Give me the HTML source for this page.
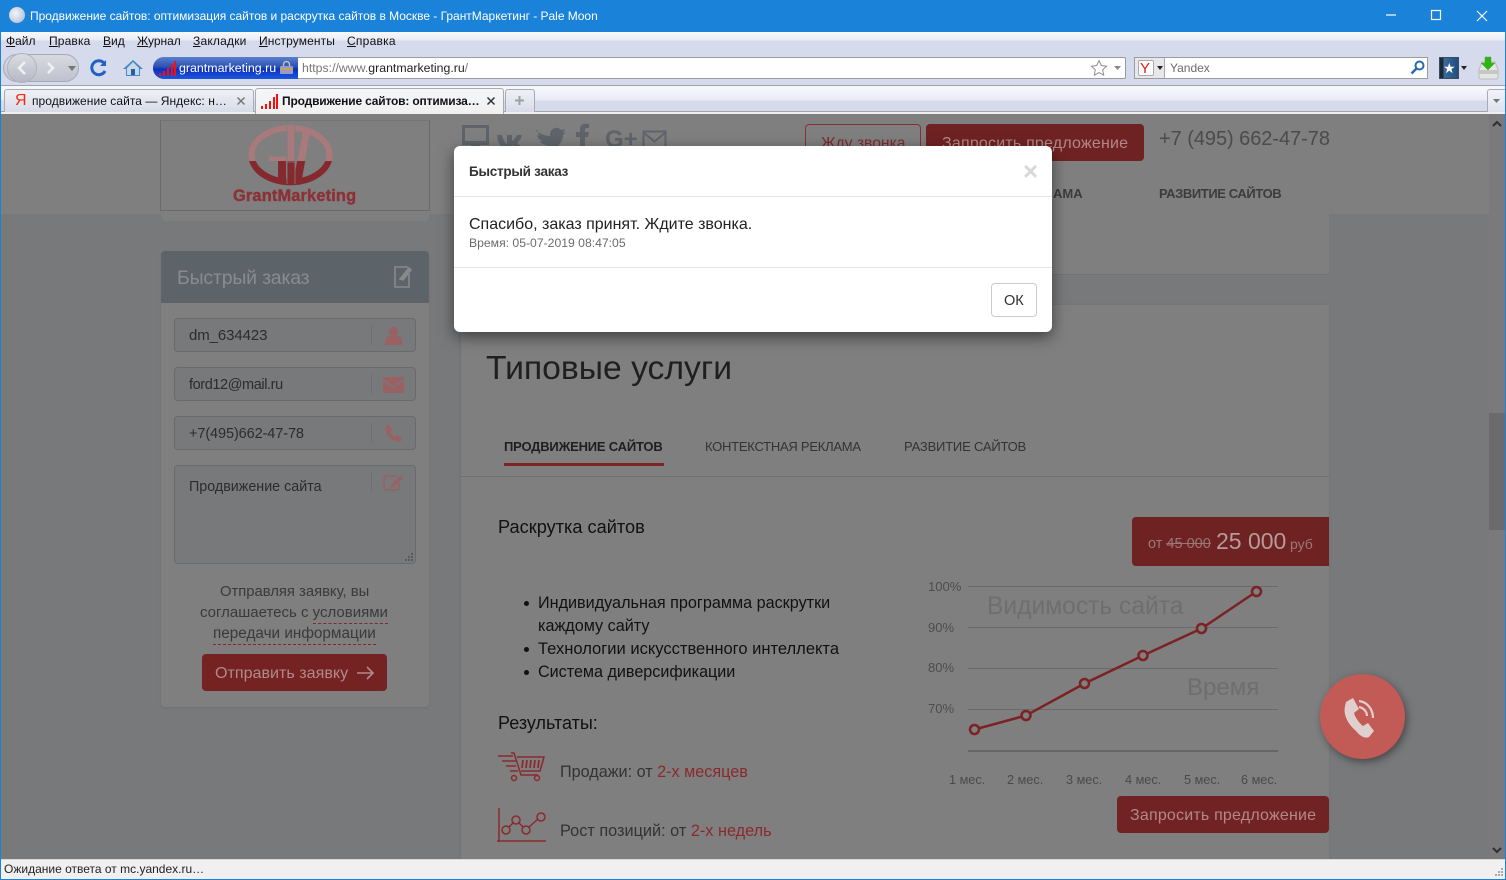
<!DOCTYPE html>
<html lang="ru"><head><meta charset="utf-8"><title>Продвижение сайтов</title>
<style>
*{box-sizing:border-box}
html,body{margin:0;padding:0;width:1506px;height:880px;overflow:hidden;background:#7d7d7d}
body{font-family:"Liberation Sans",sans-serif;position:relative}
.a{position:absolute;white-space:nowrap;line-height:1}
.b{position:absolute}
u{text-decoration-thickness:1px;text-underline-offset:1px}
.inp{position:absolute;left:174px;width:242px;height:34px;border:1px solid #686a6c;border-radius:4px;background:#77797b}
.sep{position:absolute;left:371px;width:1px;background:#6d6f71}
.t{color:#2c2c2c;font-size:15px}
.li{color:#111;left:538px}
.mn{font-size:12.700px;color:#4a4a4a;top:774px}
.pc{font-size:13px;color:#4d4d4d;left:928px}
.gl{position:absolute;left:968px;width:310px;height:1px;background:#6a6a6a}
</style></head><body>

<!-- page underneath -->
<div class="b" style="left:1px;top:114px;width:1504px;height:745px;background:#78797b"></div>
<div class="b" style="left:1px;top:114px;width:1488px;height:100px;background:#7f7f7f"></div>
<div class="b" style="left:161px;top:214px;width:268px;height:7px;background:#7f7f7f;border-radius:0 0 4px 4px"></div>
<div class="b" style="left:460px;top:214px;width:869px;height:61px;background:#7f7f7f;border-bottom:1px solid #737375"></div>
<div class="b" style="left:460px;top:305px;width:869px;height:554px;background:#7f7f7f;border-left:1px solid #737375;box-shadow:0 0 2px #737375"></div>
<div class="b" style="left:461px;top:476px;width:868px;height:1px;background:#6f6f6f"></div>

<!-- logo -->
<div class="b" style="left:160px;top:120px;width:270px;height:91px;border:1px solid #6b6b6b;border-top-color:#747474"></div>
<svg class="b" style="left:245px;top:122px" width="92" height="66" viewBox="0 0 92 66">
<defs>
<clipPath id="up"><rect x="0" y="0" width="92" height="39"/></clipPath>
<clipPath id="lo"><rect x="0" y="39" width="92" height="27"/></clipPath>
</defs>
<g clip-path="url(#up)" fill="none" stroke="#a87a7c">
<ellipse cx="45.500" cy="33" rx="39" ry="27" stroke-width="6"/>
<path d="M24 38h17M46 4v58M52 62 62 6" stroke-width="7"/>
</g>
<g clip-path="url(#lo)" fill="none" stroke="#842a2e">
<ellipse cx="45.500" cy="33" rx="39" ry="27" stroke-width="6.500"/>
<path d="M37 36v24M46 4v58M52 62 62 6" stroke-width="8"/>
</g>
<path d="M42 4v58M50 4v58M42 40h8" stroke="#7f7f7f" stroke-width=".8" fill="none"/>
</svg>
<div class="a" style="left:233px;top:188px;font-size:16.400px;font-weight:bold;color:#8c3136;letter-spacing:.15px;-webkit-text-stroke:.4px #8c3136">GrantMarketing</div>

<!-- header icons -->
<svg class="b" style="left:460px;top:122px" width="210" height="30" viewBox="0 0 210 30" fill="#5e6469">
<path d="M3.500 4.500h24v17h-24z" fill="none" stroke="#5e6469" stroke-width="3"/><path d="M2 19h27v4H2zM11 23h9v3h5v3H6v-3h5z"/>
<path d="M37 13h5c1 5 3 8 5 9v-9h5v6c2-1 4-4 5-6h5c-1 4-3 6-5 8 2 1 5 4 6 8h-5c-1-3-3-5-6-6v6h-2c-7 0-12-6-13-16z"/>
<path d="M75 8c5 4 10 6 15 6-1-7 7-11 11-6l4-1-2 4 3-1-3 3c0 11-12 18-25 13 4 0 7-1 9-3-4 0-6-2-7-4h3c-4-1-6-4-6-6l3 1c-3-3-3-6-2-6z"/>
<path d="M120 28V15h-4v-5h4V7c0-4 3-6 9-5v4c-3 0-4 0-4 2v2h4l-1 5h-3v13z"/>
<text x="145" y="25" font-family="Liberation Sans" font-size="24" font-weight="bold">G+</text>
<path d="M183.500 9.500h22v18h-22zM183.500 10.500l11 9 11-9" fill="none" stroke="#5e6469" stroke-width="2"/>
</svg>
<div class="b" style="left:805px;top:124px;width:116px;height:37px;border:1px solid #8a3034;border-radius:4px"></div>
<div class="a" style="left:821px;top:136px;font-size:15.700px;color:#7d2a2d">Жду звонка</div>
<div class="b" style="left:926px;top:124px;width:218px;height:37px;background:#6f2222;border-radius:4px"></div>
<div class="a" style="left:942px;top:136px;font-size:16px;color:#b48888;letter-spacing:.2px">Запросить предложение</div>
<div class="a" style="left:1159px;top:129px;font-size:20px;color:#4b4b4b;letter-spacing:-.05px">+7 (495) 662-47-78</div>
<div class="a" style="left:1053px;top:187px;font-size:13px;font-weight:bold;color:#3c3c3c">АМА</div>
<div class="a" style="left:1159px;top:187px;font-size:13px;font-weight:bold;color:#3c3c3c;letter-spacing:-.4px">РАЗВИТИЕ САЙТОВ</div>

<!-- left form -->
<div class="b" style="left:161px;top:251px;width:268px;height:456px;background:#7f7f7f;border-radius:4px;box-shadow:0 1px 2px #707072"></div>
<div class="b" style="left:161px;top:251px;width:268px;height:52px;background:#5c6369;border-radius:4px 4px 0 0"></div>
<div class="a" style="left:177px;top:269px;font-size:19.500px;color:#888c90;letter-spacing:-.2px">Быстрый заказ</div>
<svg class="b" style="left:393px;top:265px" width="20" height="24" viewBox="0 0 20 24" fill="none" stroke="#868a8d" stroke-width="1.600"><path d="M15 2H2v20h14V9"/><path d="M7 14 16 3l2 2-8 10z" fill="#868a8d"/></svg>

<div class="inp" style="top:318px"></div><div class="sep" style="top:325px;height:20px"></div>
<div class="a t" style="left:189px;top:328px;letter-spacing:-.1px">dm_634423</div>
<svg class="b" style="left:385px;top:326px" width="17" height="19" viewBox="0 0 17 19" fill="#9a6163"><circle cx="8.500" cy="5.500" r="4.700"/><path d="M0 19v-4c0-4 3-5 5-5h7c2 0 5 1 5 5v4z"/></svg>

<div class="inp" style="top:367px"></div><div class="sep" style="top:374px;height:20px"></div>
<div class="a t" style="left:189px;top:378px;font-size:14.500px;letter-spacing:-.4px">ford12@mail.ru</div>
<svg class="b" style="left:383px;top:377px" width="21" height="16" viewBox="0 0 21 16"><rect width="21" height="16" rx="2" fill="#9a6163"/><path d="M0 3 10.500 10 21 3" fill="none" stroke="#77797b" stroke-width="1.300"/></svg>

<div class="inp" style="top:416px"></div><div class="sep" style="top:423px;height:20px"></div>
<div class="a t" style="left:189px;top:427px;font-size:14.500px;letter-spacing:-.1px">+7(495)662-47-78</div>
<svg class="b" style="left:385px;top:425px" width="17" height="17" viewBox="0 0 17 17" fill="#9a6163"><path d="M1 1 4 0l3 5-2 2c1 2 3 4 5 5l2-2 5 3-1 3c-2 1-5 1-8-1C4 13 2 10 1 7 0 5 0 3 1 1z"/></svg>

<div class="inp" style="top:465px;height:99px"></div><div class="sep" style="top:472px;height:20px"></div>
<div class="a t" style="left:189px;top:480px;font-size:14.300px">Продвижение сайта</div>
<svg class="b" style="left:383px;top:474px" width="21" height="17" viewBox="0 0 21 17" fill="none" stroke="#9a6163" stroke-width="1.600"><path d="M14 2H3a2 2 0 0 0-2 2v10a2 2 0 0 0 2 2h11a2 2 0 0 0 2-2V9"/><path d="M8 11 17 2l3 2-9 9-4 1z" fill="#9a6163" stroke="none"/></svg>
<svg class="b" style="left:404px;top:552px" width="10" height="10" fill="#595b5d"><rect x="7" y="1" width="2" height="2"/><rect x="4" y="4" width="2" height="2"/><rect x="7" y="4" width="2" height="2"/><rect x="1" y="7" width="2" height="2"/><rect x="4" y="7" width="2" height="2"/><rect x="7" y="7" width="2" height="2"/></svg>

<div class="a t" style="left:220px;top:585px;font-size:14.800px;color:#3a3a3a">Отправляя заявку, вы</div>
<div class="a t" style="left:200px;top:605px;font-size:15px;color:#3a3a3a">соглашаетесь с <span style="border-bottom:1px dashed #7f2a2d;padding-bottom:2px">условиями</span></div>
<div class="a t" style="left:213px;top:626px;font-size:15.300px;color:#3a3a3a"><span style="border-bottom:1px dashed #7f2a2d;padding-bottom:2px">передачи информации</span></div>
<div class="b" style="left:202px;top:654px;width:185px;height:37px;background:#742222;border-radius:4px"></div>
<div class="a" style="left:215px;top:665px;font-size:16.100px;color:#b08a8a">Отправить заявку</div>
<svg class="b" style="left:357px;top:665px" width="18" height="16" fill="none" stroke="#b08a8a" stroke-width="1.600"><path d="M0 8h16M10 2l6 6-6 6"/></svg>

<!-- main content -->
<div class="a" style="left:486px;top:352px;font-size:33.700px;color:#1f1f1f">Типовые услуги</div>
<div class="a" style="left:504px;top:440px;font-size:13px;font-weight:bold;color:#1f1f1f;letter-spacing:-.2px">ПРОДВИЖЕНИЕ САЙТОВ</div>
<div class="b" style="left:504px;top:463px;width:160px;height:3px;background:#7f2424"></div>
<div class="a" style="left:705px;top:440px;font-size:13px;color:#333;letter-spacing:-.25px">КОНТЕКСТНАЯ РЕКЛАМА</div>
<div class="a" style="left:904px;top:440px;font-size:13px;color:#333;letter-spacing:-.2px">РАЗВИТИЕ САЙТОВ</div>
<div class="a" style="left:498px;top:518px;font-size:18.200px;color:#111">Раскрутка сайтов</div>

<div class="b" style="left:524px;top:601px;width:5px;height:5px;border-radius:50%;background:#111"></div>
<div class="a li" style="top:595px;font-size:16.200px">Индивидуальная программа раскрутки</div>
<div class="a li" style="top:618px;font-size:16.200px">каждому сайту</div>
<div class="b" style="left:524px;top:647px;width:5px;height:5px;border-radius:50%;background:#111"></div>
<div class="a li" style="top:641px;font-size:16.550px">Технологии искусственного интеллекта</div>
<div class="b" style="left:524px;top:670px;width:5px;height:5px;border-radius:50%;background:#111"></div>
<div class="a li" style="top:664px;font-size:16.150px">Система диверсификации</div>
<div class="a" style="left:498px;top:714px;font-size:18px;color:#111">Результаты:</div>

<svg class="b" style="left:497px;top:751px" width="50" height="32" viewBox="0 0 50 32" fill="none" stroke="#8a2a2d" stroke-width="1.500">
<path d="M1 5h15M5 10h14M9 15h10M13 20h8M14 2h3l7 22h17M20 6h27l-4 14H24"/><path d="M26 9l-1 8M30 9l-1 8M34 9l-1 8M38 9l-1 8M42 9l-1 8" stroke-width="1.700"/><circle cx="17" cy="27" r="2.500"/><circle cx="40" cy="27" r="2.500"/>
</svg>
<div class="a" style="left:560px;top:764px;font-size:16.200px;color:#333">Продажи: от <span style="color:#8a2a2d">2-х месяцев</span></div>
<svg class="b" style="left:497px;top:808px" width="50" height="36" viewBox="0 0 50 36" fill="none" stroke="#8a2a2d" stroke-width="1.500">
<path d="M2 0v34M0 33h49"/><circle cx="9" cy="22" r="4"/><circle cx="19" cy="12" r="4"/><circle cx="29" cy="22" r="4"/><circle cx="44" cy="9" r="4"/><path d="M12 19l4-4M22 15l4 4M32 19l9-8"/>
</svg>
<div class="a" style="left:560px;top:823px;font-size:16.300px;color:#333">Рост позиций: от <span style="color:#8a2a2d">2-х недель</span></div>

<!-- price -->
<div class="b" style="left:1132px;top:517px;width:197px;height:49px;background:#6f2222;border-radius:4px 0 0 4px"></div>
<div class="a" style="left:1148px;top:537px;font-size:14.500px;color:#9d7676">от <s>45 000</s></div>
<div class="a" style="left:1216px;top:530px;font-size:23px;color:#b59b9b">25 000</div>
<div class="a" style="left:1290px;top:537px;font-size:14px;color:#9d7676">руб</div>

<!-- chart -->
<div class="gl" style="top:586px"></div><div class="gl" style="top:627px"></div><div class="gl" style="top:668px"></div><div class="gl" style="top:709px"></div><div class="gl" style="top:750px;height:2px;background:#666"></div>
<div class="a pc" style="top:580px">100%</div><div class="a pc" style="top:621px">90%</div><div class="a pc" style="top:661px">80%</div><div class="a pc" style="top:702px">70%</div>
<div class="a" style="left:987px;top:595px;font-size:24.600px;color:#6e6e6e">Видимость сайта</div>
<div class="a" style="left:1187px;top:676px;font-size:24px;color:#6e6e6e">Время</div>
<svg class="b" style="left:960px;top:580px" width="310" height="160" fill="none" stroke="#7c2224" stroke-width="2.500">
<polyline points="14.500,149.500 66,135.500 124.500,103.500 183,75.500 241.500,48.500 296.500,11.500"/>
<g fill="#7f7f7f"><circle cx="14.500" cy="149.500" r="4.500"/><circle cx="66" cy="135.500" r="4.500"/><circle cx="124.500" cy="103.500" r="4.500"/><circle cx="183" cy="75.500" r="4.500"/><circle cx="241.500" cy="48.500" r="4.500"/><circle cx="296.500" cy="11.500" r="4.500"/></g>
</svg>
<div class="a mn" style="left:949px">1 мес.</div><div class="a mn" style="left:1007px">2 мес.</div><div class="a mn" style="left:1066px">3 мес.</div><div class="a mn" style="left:1125px">4 мес.</div><div class="a mn" style="left:1184px">5 мес.</div><div class="a mn" style="left:1241px">6 мес.</div>
<div class="b" style="left:1117px;top:796px;width:212px;height:37px;background:#712323;border-radius:4px"></div>
<div class="a" style="left:1130px;top:808px;font-size:16px;color:#b48888;letter-spacing:.2px">Запросить предложение</div>

<!-- call button -->
<div class="b" style="left:1320px;top:674px;width:85px;height:85px;border-radius:50%;background:#c25a55;box-shadow:2px 3px 8px rgba(40,40,40,.6)"></div>
<svg class="b" style="left:1340px;top:694px" width="40" height="46" viewBox="0 0 40 46"><path d="M6 8l7-4 6 11-5 4c1 4 5 10 9 13l5-3 6 8-5 6c-4 2-9-1-13-6C8 30 3 21 5 12z" fill="#dfcfcd"/><g fill="none" stroke="#dfcfcd" stroke-width="2.200"><path d="M19 7c8 1 14 8 14 17"/><path d="M19 13c5 1 8 5 8 9"/></g></svg>

<!-- scrollbar -->
<div class="b" style="left:1489px;top:114px;width:16px;height:745px;background:#7a7a7c"></div>
<div class="b" style="left:1489px;top:413px;width:16px;height:117px;background:#6b6b6d"></div>
<svg class="b" style="left:1491px;top:120px" width="12" height="8" fill="none" stroke="#2f2f2f" stroke-width="2"><path d="M2 6l4-4 4 4"/></svg>
<svg class="b" style="left:1491px;top:846px" width="12" height="8" fill="none" stroke="#2f2f2f" stroke-width="2"><path d="M2 2l4 4 4-4"/></svg>

<!-- modal -->
<div class="b" style="left:454px;top:146px;width:598px;height:186px;background:#fff;border-radius:6px;box-shadow:0 5px 15px rgba(0,0,0,.5)"></div>
<div class="b" style="left:454px;top:196px;width:598px;height:1px;background:#e5e5e5"></div>
<div class="b" style="left:454px;top:267px;width:598px;height:1px;background:#e5e5e5"></div>
<div class="a" style="left:469px;top:165px;font-size:13.500px;font-weight:bold;color:#333;letter-spacing:-.25px">Быстрый заказ</div>
<div class="a" style="left:1023px;top:158px;font-size:26px;font-weight:bold;color:#d8d8d8">×</div>
<div class="a" style="left:469px;top:217px;font-size:16px;color:#222">Спасибо, заказ принят. Ждите звонка.</div>
<div class="a" style="left:469px;top:237px;font-size:12.200px;color:#6b6b6b">Время: 05-07-2019 08:47:05</div>
<div class="b" style="left:991px;top:283px;width:46px;height:34px;border:1px solid #ccc;border-radius:4px;background:#fff"></div>
<div class="a" style="left:1004px;top:294px;font-size:14.500px;color:#333">ОК</div>

<!-- browser chrome -->
<div class="b" style="left:0;top:0;width:1506px;height:32px;background:#1a82d9"></div>
<div class="b" style="left:9px;top:7px;width:16px;height:16px;border-radius:50%;background:radial-gradient(circle at 40% 40%,#f2f5fa,#a8b4cc)"></div>
<div class="a" style="left:30px;top:10px;font-size:12px;color:#fff;letter-spacing:-.02px">Продвижение сайтов: оптимизация сайтов и раскрутка сайтов в Москве - ГрантМаркетинг - Pale Moon</div>
<svg class="b" style="left:1380px;top:6px" width="110" height="20" fill="none" stroke="#fff" stroke-width="1.200"><path d="M6 9h10"/><rect x="51.500" y="4.500" width="9" height="9"/><path d="M97 5l10 10M107 5 97 15"/></svg>

<div class="b" style="left:1px;top:32px;width:1504px;height:53px;background:linear-gradient(#f8f9fc 0,#e9ecf5 8px,#d5daec 9px,#d5daec 100%)"></div>
<div class="b" style="left:1px;top:85px;width:1504px;height:1px;background:#9fa2ab"></div>
<div class="a" style="left:6px;top:35px;font-size:12px;color:#111"><u>Ф</u>айл</div>
<div class="a" style="left:49px;top:35px;font-size:12px;color:#111;letter-spacing:.15px"><u>П</u>равка</div>
<div class="a" style="left:103px;top:35px;font-size:12px;color:#111"><u>В</u>ид</div>
<div class="a" style="left:137px;top:35px;font-size:12px;color:#111"><u>Ж</u>урнал</div>
<div class="a" style="left:193px;top:35px;font-size:12px;color:#111;letter-spacing:.2px"><u>З</u>акладки</div>
<div class="a" style="left:259px;top:35px;font-size:12px;color:#111;letter-spacing:.1px"><u>И</u>нструменты</div>
<div class="a" style="left:347px;top:35px;font-size:12px;color:#111;letter-spacing:.25px"><u>С</u>правка</div>

<!-- back/forward -->
<div class="b" style="left:3px;top:54px;width:76px;height:28px;border-radius:14px;background:linear-gradient(#d8dae2,#bfc2cc);border:1px solid #a8abb5"></div>
<div class="b" style="left:7px;top:53px;width:30px;height:30px;border-radius:50%;background:linear-gradient(#dadce3,#b6b9c3);border:1px solid #b0b3bd"></div>
<svg class="b" style="left:14px;top:59px" width="50" height="18" fill="none" stroke="#f0f1f5" stroke-width="2.500"><path d="M11 3 5 9l6 6M34 4l5 5-5 5"/></svg>
<svg class="b" style="left:68px;top:66px" width="8" height="5" fill="#777"><path d="M0 0h8L4 5z"/></svg>
<svg class="b" style="left:89px;top:58px" width="20" height="20" viewBox="0 0 20 20" fill="none" stroke="#1f62c4" stroke-width="3"><path d="M16 13a7 7 0 1 1-1-8"/><path d="M17 2v6h-6z" fill="#1f62c4" stroke="none"/></svg>
<svg class="b" style="left:123px;top:59px" width="20" height="18" viewBox="0 0 20 18"><path d="M10 1 0 10h3v7h14v-7h3z" fill="#4a85c4"/><path d="M10 3 4 9v7h12V9z" fill="#c9d9ec"/><rect x="8" y="10" width="4" height="6" fill="#2a5f9e"/></svg>

<!-- address bar -->
<div class="b" style="left:153px;top:57px;width:973px;height:22px;background:#fff;border:1px solid #9c9c9c;border-radius:11px 2px 2px 11px"></div>
<div class="b" style="left:153px;top:57px;width:145px;height:22px;border-radius:11px 0 0 11px;background:linear-gradient(#5a7fd0 0,#2c52b0 45%,#0c2fc0 55%,#1c57e0 100%)"></div>
<svg class="b" style="left:159px;top:60px" width="18" height="17" fill="#f41010"><rect x="0" y="13" width="2" height="3"/><rect x="4" y="11" width="2" height="5"/><rect x="8" y="8" width="2" height="8"/><rect x="12" y="4" width="2" height="12"/><rect x="15" y="1" width="2" height="15"/></svg>
<div class="a" style="left:179px;top:62px;font-size:12.400px;color:#fff">grantmarketing.ru</div>
<svg class="b" style="left:280px;top:60px" width="13" height="15"><path d="M3.500 7V4.500a3 3 0 0 1 6 0V7" fill="none" stroke="#c9c9b5" stroke-width="1.300"/><rect x="0" y="6" width="13" height="8" rx="1" fill="#9d98c4"/><rect x="0" y="8" width="13" height="2" fill="#b8a860"/></svg>
<div class="a" style="left:302px;top:62px;font-size:12.300px;color:#777">https://www.<span style="color:#222">grantmarketing.ru</span>/</div>
<svg class="b" style="left:1090px;top:59px" width="18" height="18" viewBox="0 0 18 18" fill="#fff" stroke="#909090"><path d="M9 1.500 11.300 6.500l5.200.7-3.800 3.600 1 5.400L9 13.600l-4.700 2.600 1-5.400L1.500 7.200l5.200-.7z"/></svg>
<svg class="b" style="left:1114px;top:66px" width="7" height="4" fill="#888"><path d="M0 0h7L3.500 4z"/></svg>

<!-- search -->
<div class="b" style="left:1134px;top:57px;width:294px;height:22px;background:#fff;border:1px solid #9c9c9c"></div>
<div class="b" style="left:1135px;top:58px;width:30px;height:20px;background:#e8e8ec;border-right:1px solid #a8a8a8"></div>
<div class="b" style="left:1138px;top:60px;width:16px;height:16px;background:#fff;border:1px solid #aaa;border-radius:2px"></div>
<div class="a" style="left:1140px;top:61px;font-size:15px;color:#e01b1b">Y</div>
<svg class="b" style="left:1157px;top:66px" width="6" height="4" fill="#222"><path d="M0 0h6L3 4z"/></svg>
<div class="a" style="left:1170px;top:62px;font-size:12px;color:#6c6c6c">Yandex</div>
<svg class="b" style="left:1410px;top:60px" width="15" height="15" fill="none" stroke="#2a6aa8" stroke-width="2"><circle cx="9.500" cy="5.500" r="4"/><path d="M6.500 8.500 1.500 13.500" stroke-width="2.500"/></svg>

<!-- bookmarks, download -->
<div class="b" style="left:1439px;top:57px;width:20px;height:22px;background:linear-gradient(90deg,#1c2a3a 0,#1c2a3a 3px,#3a6c9c 4px,#214e7e 100%);border:1px solid #3d4c5c"></div>
<div class="a" style="left:1443px;top:61px;font-size:14px;color:#fff">★</div>
<svg class="b" style="left:1461px;top:66px" width="6" height="4" fill="#222"><path d="M0 0h6L3 4z"/></svg>
<svg class="b" style="left:1478px;top:56px" width="21" height="24" viewBox="0 0 21 24"><path d="M4 6h13l3 8v7a2 2 0 0 1-2 2H3a2 2 0 0 1-2-2v-7z" fill="#e4e6e4" stroke="#b9bcb9"/><path d="M1 14h19v4H1z" fill="#c4c7c4"/><path d="M7 1h6v6h4l-7 7-7-7h4z" fill="#2fb312" stroke="#55a045" stroke-width=".5"/></svg>

<!-- tabs -->
<div class="b" style="left:1px;top:86px;width:1504px;height:26px;background:linear-gradient(#f9fafd 0,#e8ebf5 14px,#d5daec 15px,#d5daec 100%)"></div>
<div class="b" style="left:1px;top:111px;width:1504px;height:1px;background:#a2a4aa"></div>
<div class="b" style="left:1px;top:112px;width:1504px;height:2px;background:#efefef"></div>
<div class="b" style="left:4px;top:89px;width:250px;height:23px;background:linear-gradient(#eff0f6,#d8dbe8);border:1px solid #a9abb3;border-bottom:0;border-radius:3px 3px 0 0"></div>
<div class="a" style="left:15px;top:93px;font-size:16px;color:#f02a10">Я</div>
<div class="a" style="left:32px;top:95px;font-size:12px;color:#111;letter-spacing:.05px">продвижение сайта — Яндекс: н…</div>
<svg class="b" style="left:236px;top:96px" width="10" height="10" fill="none" stroke="#777" stroke-width="1.500"><path d="M1.500 1.500l7 7M8.500 1.500l-7 7"/></svg>
<div class="b" style="left:255px;top:88px;width:249px;height:26px;background:linear-gradient(#f5f6fa,#f0f0f0);border:1px solid #a9abb3;border-bottom:0;border-radius:3px 3px 0 0"></div>
<svg class="b" style="left:261px;top:93px" width="18" height="17" fill="#f41010"><rect x="0" y="13" width="2" height="3"/><rect x="4" y="11" width="2" height="5"/><rect x="8" y="8" width="2" height="8"/><rect x="12" y="4" width="2" height="12"/><rect x="15" y="1" width="2" height="15"/></svg>
<div class="a" style="left:282px;top:95px;font-size:12px;font-weight:bold;color:#111;letter-spacing:-.17px">Продвижение сайтов: оптимиза…</div>
<svg class="b" style="left:486px;top:96px" width="10" height="10" fill="none" stroke="#333" stroke-width="1.500"><path d="M1.500 1.500l7 7M8.500 1.500l-7 7"/></svg>
<div class="b" style="left:505px;top:89px;width:30px;height:23px;background:linear-gradient(#eff0f6,#d8dbe8);border:1px solid #a9abb3;border-bottom:0;border-radius:3px 3px 0 0"></div>
<svg class="b" style="left:515px;top:96px" width="9" height="9" fill="#a0a0a0"><path d="M3.500 0h2v3.500H9v2H5.500V9h-2V5.500H0v-2h3.500z"/></svg>
<div class="b" style="left:1487px;top:89px;width:19px;height:23px;background:linear-gradient(#f2f3f8,#dfe2ec);border:1px solid #a9abb3;border-bottom:0;border-right:0;border-radius:3px 0 0 0"></div>
<svg class="b" style="left:1493px;top:99px" width="7" height="4" fill="#777"><path d="M0 0h7L3.500 4z"/></svg>

<!-- borders -->
<div class="b" style="left:0;top:32px;width:1px;height:848px;background:#1a82d9"></div>
<div class="b" style="left:1505px;top:32px;width:1px;height:848px;background:#1a82d9"></div>

<!-- status bar -->
<div class="b" style="left:1px;top:859px;width:1504px;height:20px;background:#f0f0f0;border-top:1px solid #d8d8d8"></div>
<div class="b" style="left:0;top:879px;width:1506px;height:1px;background:#1a82d9"></div>
<div class="a" style="left:4px;top:863px;font-size:12px;color:#222">Ожидание ответа от mc.yandex.ru…</div>
<svg class="b" style="left:1494px;top:867px" width="10" height="10" fill="#aaa"><rect x="7" y="1" width="2" height="2"/><rect x="4" y="4" width="2" height="2"/><rect x="7" y="4" width="2" height="2"/><rect x="1" y="7" width="2" height="2"/><rect x="4" y="7" width="2" height="2"/><rect x="7" y="7" width="2" height="2"/></svg>
</body></html>
